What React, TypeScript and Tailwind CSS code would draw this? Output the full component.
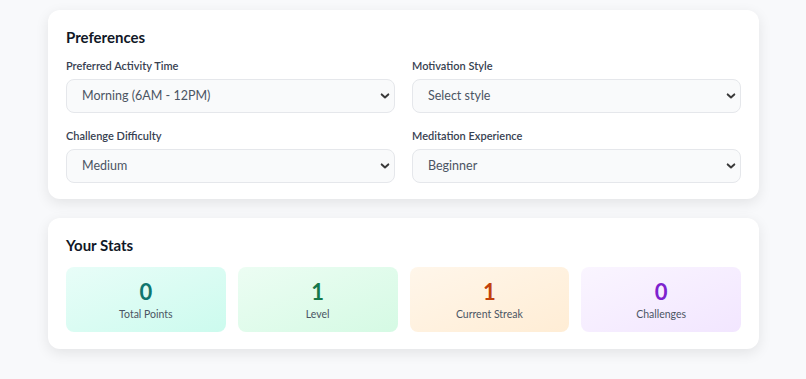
import React from "react";

function Chevron() {
  return (
    <svg
      className="pointer-events-none absolute right-[5px] top-1/2 -translate-y-1/2"
      width="10"
      height="7"
      viewBox="0 0 10 7"
      fill="none"
    >
      <path d="M1.7 1.9 L5 4.9 L8.3 1.9" stroke="#3a3a3a" strokeWidth="2" strokeLinecap="round" strokeLinejoin="round" />
    </svg>
  );
}

function Field({ label, value, options }: { label: string; value: string; options: string[] }) {
  return (
    <div className="flex flex-col">
      <label className="mb-[5px] text-[11px] leading-[16px] font-semibold text-[#374151]">{label}</label>
      <div className="relative">
        <select
          defaultValue={value}
          className="h-[34px] w-full appearance-none rounded-lg border border-[#e5e7eb] bg-[#f9fafb] pl-[15px] pr-8 text-[12.5px] text-[#4b5563] outline-none"
        >
          {options.map((o) => (
            <option key={o}>{o}</option>
          ))}
        </select>
        <Chevron />
      </div>
    </div>
  );
}

function Stat({ value, label, box, color }: { value: string; label: string; box: string; color: string }) {
  return (
    <div className={`flex h-[65px] flex-col items-center rounded-lg pt-[11px] ${box}`}>
      <div className={`text-[22px] leading-[28px] font-bold ${color}`}>{value}</div>
      <div className="mt-[1px] text-[10.5px] leading-[14px] text-[#4b5563]">{label}</div>
    </div>
  );
}

export default function App() {
  return (
    <div
      className="min-h-[379px] bg-[#f8f9fb] pt-[10px] pb-[30px] pl-[1px]"
      style={{ fontFamily: 'Lato, "Noto Sans", sans-serif' }}
    >
      <div className="mx-auto flex w-[711px] flex-col gap-[19px]">
        <section className="rounded-xl bg-white px-[18px] pt-[17px] pb-[16px] shadow-[0_4px_14px_rgba(0,0,0,0.09)]">
          <h2 className="mb-[11px] text-[15px] leading-[20px] font-bold text-[#111827]">Preferences</h2>
          <div className="grid grid-cols-2 gap-x-[17px] gap-y-[15px]">
            <Field
              label="Preferred Activity Time"
              value="Morning (6AM - 12PM)"
              options={["Morning (6AM - 12PM)", "Afternoon (12PM - 6PM)", "Evening (6PM - 12AM)"]}
            />
            <Field label="Motivation Style" value="Select style" options={["Select style", "Competitive", "Supportive"]} />
            <Field label="Challenge Difficulty" value="Medium" options={["Easy", "Medium", "Hard"]} />
            <Field label="Meditation Experience" value="Beginner" options={["Beginner", "Intermediate", "Advanced"]} />
          </div>
        </section>

        <section className="rounded-xl bg-white px-[18px] pt-[17px] pb-[17px] shadow-[0_4px_14px_rgba(0,0,0,0.09)]">
          <h2 className="mb-[12px] text-[15px] leading-[20px] font-bold text-[#111827]">Your Stats</h2>
          <div className="grid grid-cols-4 gap-[12px]">
            <Stat value="0" label="Total Points" box="bg-gradient-to-br from-[#e8fdf8] to-[#ccfbee]" color="text-[#0f766e]" />
            <Stat value="1" label="Level" box="bg-gradient-to-br from-[#ecfdf3] to-[#d5fae4]" color="text-[#15784a]" />
            <Stat value="1" label="Current Streak" box="bg-gradient-to-br from-[#fff6ea] to-[#ffedd5]" color="text-[#c2410c]" />
            <Stat value="0" label="Challenges" box="bg-gradient-to-br from-[#faf5ff] to-[#f2e6ff]" color="text-[#7e22ce]" />
          </div>
        </section>
      </div>
    </div>
  );
}
